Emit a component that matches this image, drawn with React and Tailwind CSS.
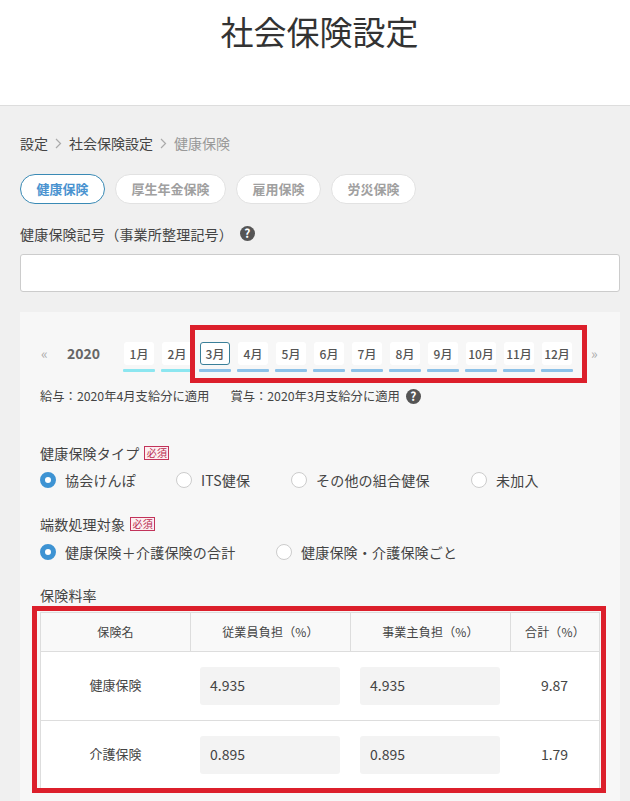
import React from 'react';

const months = ['1月', '2月', '3月', '4月', '5月', '6月', '7月', '8月', '9月', '10月', '11月', '12月'];
const tabs = ['健康保険', '厚生年金保険', '雇用保険', '労災保険'];

const Help = ({ className = '' }) => (
    <span className={`inline-flex w-[15px] h-[15px] rounded-full bg-[#555] text-white text-[12px] font-bold items-center justify-center leading-none ${className}`}>?</span>
);

const Required = () => (
    <span className="inline-flex items-center justify-center w-[25px] h-[14px] border border-[#c2335a] bg-[#fdeef1] text-[#b92c50] text-[10px] leading-none">必須</span>
);

const Radio = ({ checked, label, className = '' }) => (
    <label className={`flex items-center gap-[9px] text-[14px] tracking-[0.2px] text-[#444] ${className}`}>
        {checked ? (
            <span className="w-[16px] h-[16px] rounded-full border-[5px] border-[#3d93d3] bg-white" />
        ) : (
            <span className="w-[16px] h-[16px] rounded-full border border-[#ccc] bg-white" />
        )}
        {label}
    </label>
);

const Chevron = () => (
    <span className="w-[21px] flex justify-center">
        <svg width="7" height="11" viewBox="0 0 7 11" fill="none" stroke="#aaa" strokeWidth="1.2">
            <path d="M1 1l4.5 4.5L1 10" />
        </svg>
    </span>
);

const Month = ({ label, index }) => (
    <div className="w-[32px] shrink-0 flex flex-col items-start">
        <div className={`w-[30px] h-[23px] ml-[1px] rounded-[3px] flex items-center justify-center text-[12px] font-medium text-[#555] bg-white ${index === 2 ? 'border border-[#3a7f99]' : ''}`}>
            {label}
        </div>
        <div className={`w-[32px] h-[3px] mt-[4px] rounded-[1px] ${index < 2 ? 'bg-[#8ce6f0]' : 'bg-[#8cc1e8]'}`} />
    </div>
);

const Row = ({ name, a, b, total, last }) => (
    <div className={`grid grid-cols-[149px_160px_160px_89px] items-center text-[13px] text-[#444] ${last ? 'h-[68px]' : 'h-[69px] border-b border-[#ddd]'}`}>
        <div className="text-center pb-[2px]">{name}</div>
        <div className="pl-[10px]">
            <div className="w-[140px] h-[38px] rounded-[3px] bg-[#f3f3f3] flex items-center px-[10px] pb-[2px] text-[14px]">{a}</div>
        </div>
        <div className="pl-[10px]">
            <div className="w-[140px] h-[38px] rounded-[3px] bg-[#f3f3f3] flex items-center px-[10px] pb-[2px] text-[14px]">{b}</div>
        </div>
        <div className="text-center text-[14px] pb-[2px]">{total}</div>
    </div>
);

export default function App() {
    return (
        <div className="relative w-[630px] h-[801px] overflow-hidden bg-[#f0f0f0] font-['Noto_Sans_CJK_JP','Noto_Sans',sans-serif] text-[#333]">
            <header className="h-[106px] bg-white border-b border-[#ddd] flex justify-center pt-[7px]">
                <h1 className="text-[33px] leading-[48px] font-normal text-[#333] pl-[9px]">社会保険設定</h1>
            </header>

            <div className="pl-[20px] pr-[10px]">
                <nav className="flex items-center h-[20px] mt-[28px] pb-[2px] text-[14px] text-[#444]">
                    <span>設定</span>
                    <Chevron />
                    <span>社会保険設定</span>
                    <Chevron />
                    <span className="text-[#999]">健康保険</span>
                </nav>

                <div className="flex gap-[10px] mt-[20px]">
                    {tabs.map((tab, i) => (
                        <div
                            key={tab}
                            className={`h-[30px] px-[15.5px] rounded-full bg-white border flex items-center text-[13px] font-bold ${i === 0 ? 'border-[#3a8ab5] text-[#4a93d0]' : 'border-[#e2e2e2] text-[#a0a0a0]'}`}
                        >
                            {tab}
                        </div>
                    ))}
                </div>

                <div className="flex items-center h-[20px] mt-[20px] text-[14px] tracking-[0.2px] text-[#444]">
                    健康保険記号（事業所整理記号）
                    <Help className="ml-[7px] -mt-[2px]" />
                </div>

                <div className="h-[38px] mt-[10px] bg-white border border-[#ccc] rounded-[3px]" />

                <section className="mt-[20px] h-[489px] bg-[#f7f7f7] px-[20px] pt-[30px]">
                    <div className="flex items-start">
                        <span className="w-[27px] shrink-0 h-[23px] pl-[1px] flex items-center text-[14px] text-[#aaa]">«</span>
                        <span className="w-[56px] shrink-0 h-[23px] flex items-center text-[14px] font-bold text-[#666]">2020</span>
                        <div className="flex gap-[6px]">
                            {months.map((m, i) => (
                                <Month key={m} label={m} index={i} />
                            ))}
                        </div>
                        <span className="ml-[18px] w-[9px] shrink-0 h-[23px] flex items-center text-[14px] text-[#aaa]">»</span>
                    </div>

                    <div className="flex items-center h-[18px] mt-[15px] text-[12.3px] text-[#444]">
                        <span>給与：2020年4月支給分に適用</span>
                        <span className="ml-[21px]">賞与：2020年3月支給分に適用</span>
                        <Help className="ml-[6px]" />
                    </div>

                    <div className="flex items-center gap-[5px] h-[20px] mt-[38px] text-[14px] tracking-[0.2px] text-[#444]">
                        健康保険タイプ
                        <Required />
                    </div>
                    <div className="flex h-[20px] mt-[7px]">
                        <Radio checked label="協会けんぽ" className="w-[136px]" />
                        <Radio label="ITS健保" className="w-[115px]" />
                        <Radio label="その他の組合健保" className="w-[180px]" />
                        <Radio label="未加入" />
                    </div>

                    <div className="flex items-center gap-[5px] h-[20px] mt-[24px] text-[14px] tracking-[0.2px] text-[#444]">
                        端数処理対象
                        <Required />
                    </div>
                    <div className="flex h-[20px] mt-[8px]">
                        <Radio checked label="健康保険＋介護保険の合計" className="w-[236px]" />
                        <Radio label="健康保険・介護保険ごと" />
                    </div>

                    <div className="flex items-center h-[20px] mt-[23px] text-[14px] tracking-[0.2px] text-[#444]">保険料率</div>

                    <div className="mt-[7px] w-[560px] bg-white border-t border-l border-r border-[#ddd]">
                        <div className="grid grid-cols-[149px_160px_160px_89px] h-[39px] bg-[#f9f9f9] border-b border-[#ddd] text-[12px] tracking-[0.2px] text-[#444]">
                            <div className="flex items-center justify-center">保険名</div>
                            <div className="flex items-center justify-center border-l border-[#ddd]">従業員負担（%）</div>
                            <div className="flex items-center justify-center border-l border-[#ddd]">事業主負担（%）</div>
                            <div className="flex items-center justify-center border-l border-[#ddd]">合計（%）</div>
                        </div>
                        <Row name="健康保険" a="4.935" b="4.935" total="9.87" />
                        <Row name="介護保険" a="0.895" b="0.895" total="1.79" last />
                    </div>
                </section>
            </div>

            {/* annotation frames drawn over the screenshot */}
            <div className="absolute left-[190px] top-[325px] w-[397px] h-[58px] border-[5px] border-[#dc1f2b]" />
            <div className="absolute left-[32px] top-[606px] w-[574px] h-[187px] border-[5px] border-[#dc1f2b]" />
        </div>
    );
}
